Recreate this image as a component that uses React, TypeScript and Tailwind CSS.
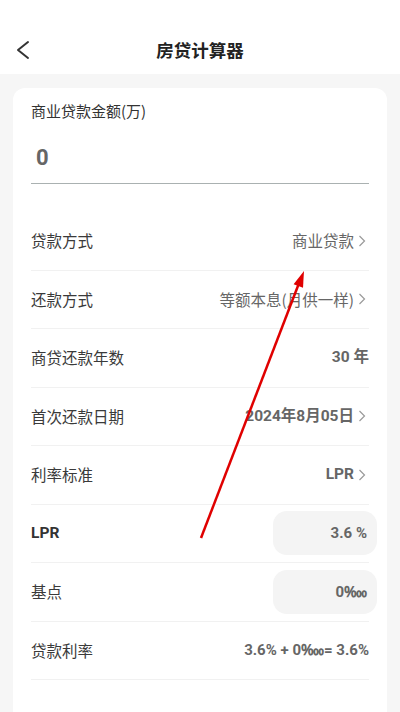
import React from "react";

const font = { fontFamily: '"Noto Sans CJK SC", "Noto Sans", sans-serif' };
const numFont = { fontFamily: 'Roboto, "Noto Sans CJK SC", sans-serif' };

function Chevron() {
  return (
    <svg width="8" height="12" viewBox="0 0 8 12" className="ml-[4px] mr-[3px] shrink-0">
      <polyline points="1.5,1 6.5,6 1.5,11" fill="none" stroke="#9a9a9a" strokeWidth="1.2" />
    </svg>
  );
}

function Row({ label, children, bold }: { label: string; children: React.ReactNode; bold?: boolean }) {
  return (
    <div className="h-[58.5px] border-b border-[#f1f1f1] flex items-center justify-between">
      <span
        className={bold ? "text-[15.5px] font-bold text-[#333]" : "text-[15.5px] text-[#3a3a3a]"}
        style={bold ? numFont : font}
      >
        {label}
      </span>
      {children}
    </div>
  );
}

export default function App() {
  return (
    <div className="relative w-[400px] h-[712px] overflow-hidden bg-[#f6f6f6]" style={font}>
      <div className="h-[74px] bg-white pt-[28px]">
        <div className="relative h-[44px] flex items-center justify-center">
          <svg width="20" height="20" viewBox="0 0 20 20" className="absolute left-[13px] top-[12px]">
            <polyline points="15,2 5,10 15,18" fill="none" stroke="#333" strokeWidth="2" strokeLinecap="round" strokeLinejoin="round" />
          </svg>
          <span className="text-[17.5px] font-bold text-[#222]">房贷计算器</span>
        </div>
      </div>

      <div className="mx-[13px] mt-[14px] h-[700px] rounded-[12px] bg-white px-[18px] pt-[12px]">
        <div className="text-[15px] leading-[22px] text-[#333]">商业贷款金额(万)</div>
        <div className="h-[62px] border-b border-[#aab1b1] pt-[10px] flex items-center">
          <span className="pl-[5px] text-[22px] font-bold text-[#666]" style={numFont}>0</span>
        </div>

        <div className="mt-[28px]">
          <Row label="贷款方式">
            <div className="flex items-center text-[15.5px] text-[#666]">
              商业贷款
              <Chevron />
            </div>
          </Row>
          <Row label="还款方式">
            <div className="flex items-center text-[15.5px] text-[#666]">
              等额本息(月供一样)
              <Chevron />
            </div>
          </Row>
          <Row label="商贷还款年数">
            <div className="flex items-center text-[15.5px] font-bold text-[#666]" style={numFont}>
              30 年
            </div>
          </Row>
          <Row label="首次还款日期">
            <div className="flex items-center text-[15.5px] font-bold text-[#666]" style={numFont}>
              2024年8月05日
              <Chevron />
            </div>
          </Row>
          <Row label="利率标准">
            <div className="flex items-center text-[15.5px] font-bold text-[#666]" style={numFont}>
              LPR
              <Chevron />
            </div>
          </Row>
          <Row label="LPR" bold>
            <div className="mr-[-8px] h-[44px] w-[104px] rounded-[14px] bg-[#f4f4f4] flex items-center justify-end pr-[10px] text-[15px] font-bold text-[#666]" style={numFont}>
              3.6 %
            </div>
          </Row>
          <Row label="基点">
            <div className="mr-[-8px] h-[44px] w-[104px] rounded-[14px] bg-[#f4f4f4] flex items-center justify-end pr-[10px] text-[15px] font-bold text-[#666]" style={numFont}>
              0‱
            </div>
          </Row>
          <Row label="贷款利率">
            <div className="text-[15px] font-bold text-[#666]" style={numFont}>
              3.6% + 0‱= 3.6%
            </div>
          </Row>
        </div>
      </div>

      <svg className="absolute left-0 top-0 pointer-events-none" width="400" height="712" viewBox="0 0 400 712">
        <line x1="201" y1="538" x2="298.3" y2="285" stroke="#e00000" strokeWidth="2.5" />
        <polygon points="304,271 303,287.8 293.6,284.2" fill="#e00000" />
      </svg>
    </div>
  );
}
